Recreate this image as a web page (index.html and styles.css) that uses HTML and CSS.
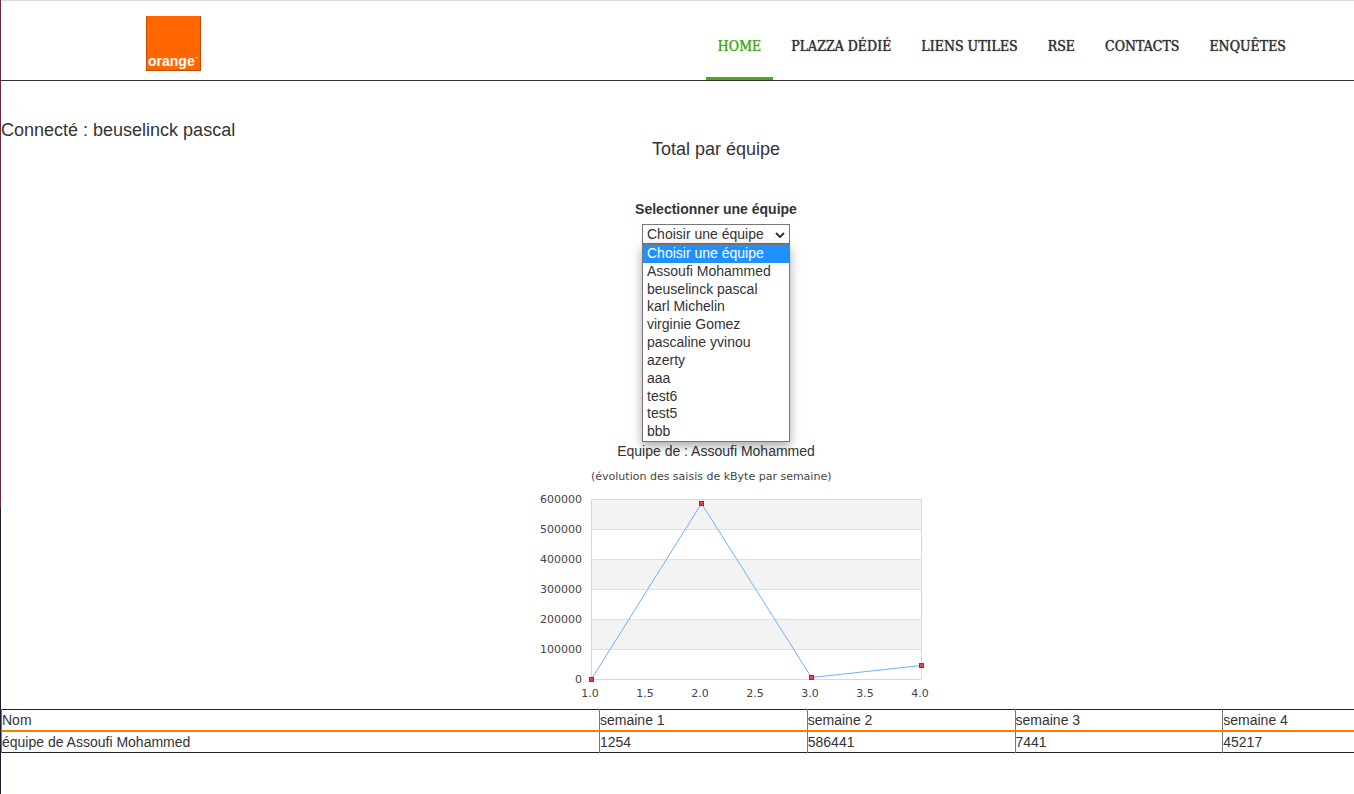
FILE: index.html
```html
<!DOCTYPE html>
<html lang="fr">
<head>
<meta charset="utf-8">
<title>Total par équipe</title>
<link rel="stylesheet" href="styles.css">
</head>
<body>
<div class="page">
  <header class="header">
    <div class="container">
      <a class="logo" href="#" aria-label="orange"><span class="logo-name">orange</span><span class="logo-tm">™</span></a>
      <nav class="nav">
        <a class="active" href="#">HOME</a>
        <a href="#">PLAZZA DÉDIÉ</a>
        <a href="#">LIENS UTILES</a>
        <a href="#">RSE</a>
        <a href="#">CONTACTS</a>
        <a href="#">ENQUÊTES</a>
      </nav>
    </div>
  </header>
  <main>
    <p class="user">Connecté : beuselinck pascal</p>
    <h1 class="title">Total par équipe</h1>
    <form class="picker">
      <label for="team">Selectionner une équipe</label>
      <div class="field">
        <select id="team"><option>Choisir une équipe</option></select>
        <svg class="arrow" viewBox="0 0 10 6" aria-hidden="true"><path d="M1 1l4 4 4-4"/></svg>
        <ul class="menu" role="listbox" aria-label="Équipes">
          <li class="selected" role="option" aria-selected="true">Choisir une équipe</li>
          <li role="option">Assoufi Mohammed</li>
          <li role="option">beuselinck pascal</li>
          <li role="option">karl Michelin</li>
          <li role="option">virginie Gomez</li>
          <li role="option">pascaline yvinou</li>
          <li role="option">azerty</li>
          <li role="option">aaa</li>
          <li role="option">test6</li>
          <li role="option">test5</li>
          <li role="option">bbb</li>
        </ul>
      </div>
    </form>
    <p class="team">Equipe de : Assoufi Mohammed</p>
    <svg class="chart" width="450" height="246" viewBox="0 0 450 246" role="img" aria-label="évolution des saisis de kByte par semaine">
      <text class="t" x="100" y="17">(évolution des saisis de kByte par semaine)</text>
      <g class="bands"><path d="M100 36h330v30H100zM100 96h330v30H100zM100 156h330v30H100z"/></g>
      <path class="grid" d="M101 66.500h329M101 96.500h329M101 126.500h329M101 156.500h329M101 186.500h329"/>
      <path class="frame" d="M100.500 36.500h330v180h-330z"/>
      <path class="line" d="M100.500 216L210.500 40.500 320.500 214.500 430.500 202.500"/>
      <g class="points">
        <rect x="98.500" y="214.500" width="4" height="4"/>
        <rect x="208.500" y="38.500" width="4" height="4"/>
        <rect x="318.500" y="212.500" width="4" height="4"/>
        <rect x="428.500" y="200.500" width="4" height="4"/>
      </g>
      <g class="y">
        <text x="91" y="40">600000</text><text x="91" y="70">500000</text><text x="91" y="100">400000</text><text x="91" y="130">300000</text><text x="91" y="160">200000</text><text x="91" y="190">100000</text><text x="91" y="220">0</text>
      </g>
      <g class="x">
        <text x="99" y="234">1.0</text><text x="154" y="234">1.5</text><text x="209" y="234">2.0</text><text x="264" y="234">2.5</text><text x="319" y="234">3.0</text><text x="374" y="234">3.5</text><text x="429" y="234">4.0</text>
      </g>
    </svg>
    <table class="weeks">
      <thead><tr><th class="name" scope="col">Nom</th><th scope="col">semaine 1</th><th scope="col">semaine 2</th><th scope="col">semaine 3</th><th scope="col">semaine 4</th></tr></thead>
      <tbody><tr><td>équipe de Assoufi Mohammed</td><td>1254</td><td>586441</td><td>7441</td><td>45217</td></tr></tbody>
    </table>
  </main>
</div>
</body>
</html>
```
FILE: styles.css
```css
* { box-sizing: border-box; }
html { min-height: 100%; background: #fff; }
body {
  margin: 0;
  min-height: 100vh;
  overflow-x: hidden;
  font: 14px/20px "Liberation Sans", Arial, sans-serif;
  color: #333;
  background: linear-gradient(#6b2d3a 64%, #1b1b2f 64%) left top / 1px 100% no-repeat #fff;
}
/* The page runs slightly wider than the window. */
.page { margin: 0 -77px 0 1px; }
.header { border-top: 1px solid #dcdcdc; border-bottom: 1px solid #333; }
.container {
  display: flex;
  justify-content: space-between;
  align-items: center;
  max-width: 1170px;
  height: 79px;
  margin: 0 auto;
  padding: 0 15px;
}
.logo {
  display: flex;
  align-items: flex-end;
  width: 55px;
  height: 55px;
  margin-top: 5px;
  padding: 0 0 1px 1px;
  border: 1px solid #c04c00;
  border-top-color: #ff6600;
  background: #ff6600;
  color: #fff;
  font-weight: bold;
  line-height: 15px;
  text-decoration: none;
}
.logo-name { font-size: 14px; }
.logo-tm { font-size: 4px; align-self: flex-end; line-height: 20px; }
.nav { display: flex; gap: 6px; align-self: stretch; margin-right: -12px; }
.nav a {
  padding: 0 12px;
  border-bottom: 3px solid transparent;
  color: #333;
  font: 14px/90px "Roboto Slab", "DejaVu Serif Condensed", "DejaVu Serif", serif;
  font-weight: 500;
  text-shadow: 0 0 1px currentColor;
  text-decoration: none;
  white-space: nowrap;
  height: 79px;
}
.nav .active { color: #4aa823; border-color: #4aa823; }
p, h1 { margin: 0; }
.user { padding-top: 39px; font-size: 18px; }
.title { font-size: 18px; font-weight: normal; line-height: 18px; text-align: center; }
.picker { display: flex; flex-direction: column; align-items: center; gap: 5px; padding-top: 41px; }
.picker label { font-weight: bold; }
.field { position: relative; width: 148px; height: 20px; }
.field select {
  appearance: none;
  display: block;
  width: 100%;
  height: 20px;
  padding: 0 4px;
  border: 1px solid #767676;
  border-radius: 0;
  background: #fff;
  color: #333;
  font: inherit;
  line-height: 18px;
}
.arrow { position: absolute; right: 5px; top: 8px; width: 10px; height: 6px; fill: none; stroke: #333; stroke-width: 2; }
.menu {
  position: absolute;
  top: 100%;
  left: 0;
  right: 0;
  display: flex;
  flex-direction: column;
  height: 198px;
  margin: 0;
  padding: 0;
  border: 1px solid #767676;
  background: #fff;
  box-shadow: 0 4px 10px rgba(0, 0, 0, .35);
  list-style: none;
}
.menu li { flex: 1 1 0; min-height: 0; padding: 0 4px; line-height: 16px; }
.menu .selected { background: #1e90ff; color: #fff; }
.team { padding-top: 197px; text-align: center; }
.chart { display: block; margin: 2px auto 0; font: 11px "DejaVu Sans", sans-serif; fill: #444; }
.bands { fill: #f3f3f3; }
.grid { stroke: #e0e0e0; }
.frame { fill: none; stroke: #d8d8d8; }
.line { fill: none; stroke: #70b0f8; }
.points { fill: #f04050; stroke: #e01010; }
.y { text-anchor: end; }
.x { text-anchor: middle; }
.weeks { width: 100%; table-layout: fixed; border-collapse: collapse; border: 1px solid #222; }
.weeks th, .weeks td { height: 21px; padding: 0; border-left: 1px solid #777; font-weight: normal; text-align: left; line-height: 20px; }
.weeks .name { width: 598px; }
.weeks thead tr { border-bottom: 2px solid #ff7900; }
```
